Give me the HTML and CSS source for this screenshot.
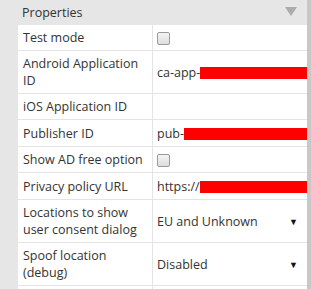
FILE: index.html
```html
<!DOCTYPE html>
<html>
  <head>
    <title>Properties</title>
    <meta charset='utf-8'>
    <link rel="stylesheet" href="styles.css">
  </head>
  <body>
    <div class="wrap">
      <div class="side"></div>
      <div class="panel">
        <div class="head">
          Properties
          <span class="tri"></span>
        </div>
        <table class="props">
          <tr>
            <td class="k">Test mode</td>
            <td class="v"><span class="chk"></span></td>
          </tr>
          <tr>
            <td class="k">Android Application ID</td>
            <td class="v"><span class="txt">ca-app-</span><span class="redact r1"></span></td>
          </tr>
          <tr>
            <td class="k">iOS Application ID</td>
            <td class="v"></td>
          </tr>
          <tr>
            <td class="k">Publisher ID</td>
            <td class="v"><span class="txt">pub-</span><span class="redact r2"></span></td>
          </tr>
          <tr>
            <td class="k">Show AD free option</td>
            <td class="v"><span class="chk"></span></td>
          </tr>
          <tr>
            <td class="k">Privacy policy URL</td>
            <td class="v"><span class="txt">https://</span><span class="redact r3"></span></td>
          </tr>
          <tr>
            <td class="k">Locations to show user consent dialog</td>
            <td class="v"><div class="sel">EU and Unknown<span class="arr">&#9660;</span></div></td>
          </tr>
          <tr>
            <td class="k">Spoof location (debug)</td>
            <td class="v"><div class="sel">Disabled<span class="arr">&#9660;</span></div></td>
          </tr>
          <tr class="last">
            <td class="k"></td>
            <td class="v"></td>
          </tr>
        </table>
      </div>
      <div class="bar"></div>
    </div>
  </body>
</html>
```
FILE: styles.css
```css
body {
  margin: 0;
  background: #e6e6e6;
  font-family: "Open Sans", "Noto Sans", sans-serif;
  font-size: 12.5px;
  color: #333;
  overflow: hidden;
}
.wrap {
  display: flex;
  height: 289px;
  overflow: hidden;
}
.side {
  width: 18px;
  flex: none;
}
.panel {
  width: 289px;
  flex: none;
}
.bar {
  width: 4px;
  flex: none;
  background: #c8c8c8;
}
.head {
  position: relative;
  height: 25px;
  line-height: 25px;
  padding-left: 4px;
}
.tri {
  position: absolute;
  right: 10px;
  top: 7px;
  width: 0;
  height: 0;
  border-left: 6px solid transparent;
  border-right: 6px solid transparent;
  border-top: 9px solid #acacac;
}
.props {
  border-collapse: collapse;
  background: #fff;
  width: 289px;
  table-layout: fixed;
}
.props td {
  border-bottom: 1px solid #e4e4e4;
  padding: 4px 4px;
  line-height: 17px;
  vertical-align: middle;
}
.props td.k {
  width: 125px;
  border-right: 1px solid #e4e4e4;
  padding-left: 5px;
}
.props td.v {
  padding-left: 4px;
  padding-right: 0;
  white-space: nowrap;
  overflow: hidden;
}
.last td {
  height: 17px;
  border-bottom: none;
}
.chk {
  display: inline-block;
  width: 11px;
  height: 11px;
  border: 1px solid #9a9a9a;
  border-radius: 2px;
  background: linear-gradient(#f4f4f4, #dedede);
  vertical-align: middle;
}
.txt {
  vertical-align: middle;
}
.redact {
  display: inline-block;
  height: 12px;
  background: #ff0000;
  vertical-align: middle;
}
.r1 { width: 140px; }
.r2 { width: 140px; }
.r3 { width: 108px; }
.sel {
  display: flex;
  justify-content: space-between;
  padding-right: 9px;
}
.arr {
  font-size: 9px;
  color: #111;
}
```
